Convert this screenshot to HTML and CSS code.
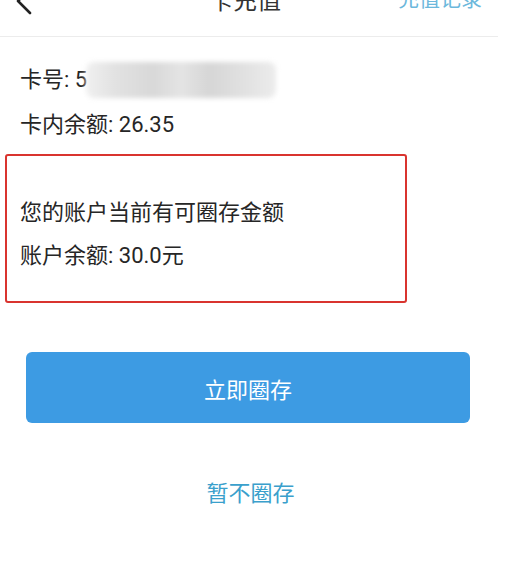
FILE: index.html
```html
<!DOCTYPE html>
<html lang="zh">
<head>
<meta charset="utf-8">
<link rel="stylesheet" href="styles.css">
</head>
<body>
<div class="page">
  <header class="topbar">
    <span class="back">
      <svg width="20" height="30" viewBox="0 0 20 30"><path d="M16 3 L4 15 L16 27" fill="none" stroke="#222" stroke-width="2.6" stroke-linecap="round" stroke-linejoin="round"/></svg>
    </span>
    <span class="title">卡充值</span>
    <span class="record">充值记录</span>
  </header>

  <section class="info">
    <div class="line">卡号: 5<span class="masked"></span></div>
    <div class="line">卡内余额: 26.35</div>
  </section>

  <section class="notice">
    <div class="line">您的账户当前有可圈存金额</div>
    <div class="line">账户余额: 30.0元</div>
  </section>

  <button class="primary">立即圈存</button>
  <div class="skip">暂不圈存</div>
</div>
</body>
</html>
```

FILE: styles.css
```css
html, body {
  margin: 0;
  padding: 0;
  background: #fff;
}
body {
  font-family: "Roboto", "Noto Sans CJK SC", sans-serif;
  color: #222;
  overflow: hidden;
}
.page {
  width: 505px;
}
.topbar {
  display: grid;
  grid-template-columns: 1fr auto 1fr;
  align-items: center;
  height: 70px;
  margin-top: -34px;
  margin-right: 7px;
  border-bottom: 1px solid #ececec;
  padding: 0 16px 0 14px;
}
.back {
  display: flex;
  align-items: center;
}
.back svg { display: block; }
.title {
  font-size: 24px;
  color: #333;
  line-height: 30px;
  margin-right: 6px;
}
.record {
  justify-self: end;
  font-size: 21px;
  color: #6cb8dc;
  line-height: 30px;
  margin-top: -4px;
}
.info {
  padding: 20px 0 0 20px;
}
.line {
  font-size: 22px;
  line-height: 45px;
  height: 45px;
  display: flex;
  align-items: center;
  color: #262626;
}
.masked {
  display: inline-block;
  width: 190px;
  height: 36px;
  margin-left: -1px;
  border-radius: 8px;
  background: linear-gradient(90deg, #f0f0f0 0%, #e2e2e2 15%, #d8d8d8 35%, #e4e4e4 50%, #d6d6d6 65%, #e2e2e2 85%, #ececec 100%);
  filter: blur(2.5px);
}
.notice {
  box-sizing: border-box;
  margin: 7px 0 0 5px;
  width: 402px;
  border: 2px solid #d9342f;
  border-radius: 3px;
  padding: 35px 0 24px 13px;
}
.notice .line {
  height: 43px;
  line-height: 43px;
}
.primary {
  display: block;
  margin: 49px 0 0 26px;
  width: 444px;
  height: 71px;
  border: none;
  border-radius: 6px;
  background: #3d9be3;
  color: #fff;
  font-family: "Roboto", "Noto Sans CJK SC", sans-serif;
  font-size: 22px;
  padding: 0;
}
.skip {
  margin-top: 49px;
  height: 44px;
  line-height: 44px;
  text-align: center;
  font-size: 22px;
  color: #3aa0cc;
  padding-right: 4px;
}
```
